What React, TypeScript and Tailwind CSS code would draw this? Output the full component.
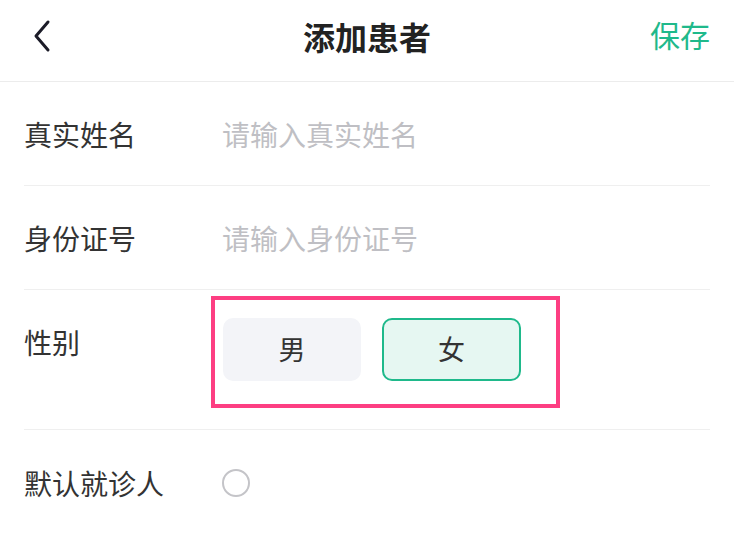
import React from "react";

export default function App() {
  const font = { fontFamily: '"Noto Sans CJK SC", "Noto Sans", sans-serif' };
  return (
    <div className="w-[734px] h-[544px] bg-white overflow-hidden relative" style={font}>
      <div className="h-[82px] border-b border-[#ececec] flex items-center justify-between px-[24px] relative">
        <svg width="30" height="36" viewBox="0 0 30 36" className="ml-[3px] -mt-[10px]">
          <path d="M21 4 L9 18 L21 32" fill="none" stroke="#1c1c28" strokeWidth="3" strokeLinecap="round" strokeLinejoin="round" />
        </svg>
        <div className="absolute left-0 right-0 top-0 h-[72px] flex items-center justify-center pointer-events-none">
          <span className="text-[32px] font-bold text-[#222]">添加患者</span>
        </div>
        <span className="text-[30px] text-[#1fb98b] -mt-[12px]">保存</span>
      </div>
      <div className="px-[24px]">
        <div className="h-[104px] border-b border-[#efefef] flex items-center">
          <span className="w-[198px] text-[28px] text-[#333]">真实姓名</span>
          <span className="text-[28px] text-[#bfbfc4]">请输入真实姓名</span>
        </div>
        <div className="h-[104px] border-b border-[#efefef] flex items-center">
          <span className="w-[198px] text-[28px] text-[#333]">身份证号</span>
          <span className="text-[28px] text-[#bfbfc4]">请输入身份证号</span>
        </div>
        <div className="h-[140px] border-b border-[#efefef] flex items-start relative">
          <span className="w-[198px] text-[28px] leading-[36px] mt-[34px] text-[#333]">性别</span>
          <div className="flex gap-[21px] mt-[28px] ml-[1px]">
            <div className="w-[138px] h-[63px] rounded-[10px] bg-[#f3f4f8] flex items-center justify-center text-[27px] text-[#333]">男</div>
            <div className="w-[139px] h-[63px] rounded-[10px] bg-[#e6f7f2] border-2 border-[#1fb98b] flex items-center justify-center text-[27px] text-[#333]">女</div>
          </div>
          <div className="absolute left-[187px] top-[6px] w-[349px] h-[112px] border-4 border-[#fd3e82] pointer-events-none" />
        </div>
        <div className="h-[106px] flex items-center">
          <span className="w-[198px] text-[28px] text-[#333]">默认就诊人</span>
          <div className="w-[28px] h-[28px] rounded-full border-2 border-[#c4c4c8]" />
        </div>
      </div>
    </div>
  );
}
